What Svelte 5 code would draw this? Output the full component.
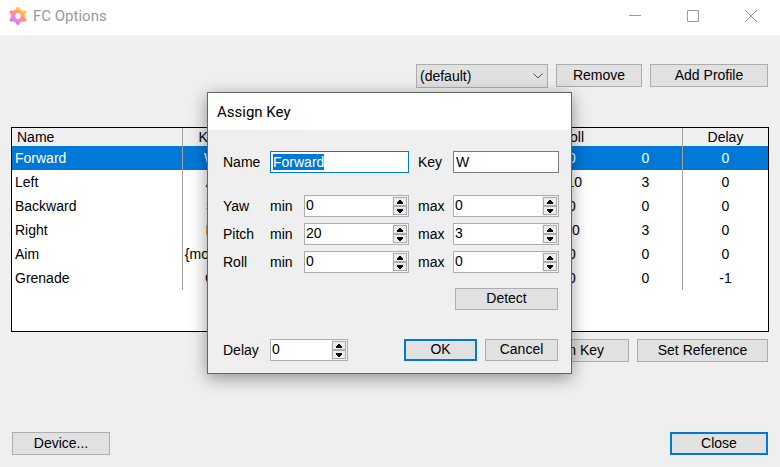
<script>
  import { onMount } from 'svelte';

  const profiles = ['(default)'];
  const rows = [
    { name: 'Forward', key: 'W', axes: [0, 0, 20, 3, 0, 0], delay: 0 },
    { name: 'Left', key: 'A', axes: [0, 0, 0, 0, -10, 3], delay: 0 },
    { name: 'Backward', key: 'S', axes: [0, 0, -10, 3, 0, 0], delay: 0 },
    { name: 'Right', key: 'D', axes: [0, 0, 0, 0, 10, 3], delay: 0 },
    { name: 'Aim', key: '{mouse}', axes: [0, 0, 0, 0, 0, 0], delay: 0 },
    { name: 'Grenade', key: 'G', axes: [0, 0, 0, 0, 0, 0], delay: -1 }
  ];

  let selected = $state(0);
  let profile = $state('(default)');
  let name = $state('Forward');
  let key = $state('W');
  let delay = $state(0);
  let axes = $state([
    { label: 'Yaw', min: 0, max: 0 },
    { label: 'Pitch', min: 20, max: 3 },
    { label: 'Roll', min: 0, max: 0 }
  ]);
  let nameInput;

  onMount(() => {
    nameInput.focus();
    nameInput.select();
  });
</script>

{#snippet spinner(id, label, value, set)}
  <div class="spin">
    <input {id} type="number" aria-label={label} {value} oninput={(e) => set(+e.currentTarget.value)} />
    <div class="steps">
      <button type="button" tabindex="-1" aria-label="Increase {label}" onclick={() => set(value + 1)}>
        <svg width="8" height="4" viewBox="0 0 8 4"><path d="M3 0h2v1h1v1h1v2H1V2h1V1h1z" /></svg>
      </button>
      <button type="button" tabindex="-1" aria-label="Decrease {label}" onclick={() => set(value - 1)}>
        <svg width="8" height="4" viewBox="0 0 8 4"><path d="M1 0h6v2H6v1H5v1H3V3H2V2H1z" /></svg>
      </button>
    </div>
  </div>
{/snippet}

<div class="window">
  <header class="titlebar">
    <svg class="logo" width="18" height="20" viewBox="0 0 18 20">
      <defs>
        <linearGradient id="gear" gradientUnits="userSpaceOnUse" x1="4" y1="17" x2="14" y2="3">
          <stop offset="0" stop-color="#b886ff" />
          <stop offset="0.3" stop-color="#ff80d5" />
          <stop offset="0.55" stop-color="#ff9080" />
          <stop offset="1" stop-color="#ffd445" />
        </linearGradient>
      </defs>
      <g fill="none" stroke="url(#gear)" stroke-linecap="round">
        <circle cx="9" cy="10" r="5" stroke-width="4" />
        <path
          stroke-width="4"
          d="M9 5L9.010 3M13.300 7.500L15.500 6.300M13.300 12.500L15.500 13.700M9 15L9.010 17M4.700 12.500L2.500 13.700M4.700 7.500L2.500 6.300"
        />
      </g>
    </svg>
    <h1>FC Options</h1>
    <div class="controls">
      <button type="button" aria-label="Minimize">
        <svg width="12" height="12" viewBox="0 0 12 12"><path d="M0 5.500h12" /></svg>
      </button>
      <button type="button" aria-label="Maximize">
        <svg width="12" height="12" viewBox="0 0 12 12"><path d="M.5.5h11v11H.5z" /></svg>
      </button>
      <button type="button" aria-label="Close window">
        <svg width="12" height="12" viewBox="0 0 12 12"><path d="M0 0l12 12M12 0L0 12" /></svg>
      </button>
    </div>
  </header>

  <main>
    <div class="toolbar">
      <div class="combo">
        <select aria-label="Profile" bind:value={profile}>
          {#each profiles as p}<option>{p}</option>{/each}
        </select>
        <svg width="10" height="6" viewBox="0 0 10 6"><path d="M.5.5L5 5 9.500.5" /></svg>
      </div>
      <button type="button" class="btn remove">Remove</button>
      <button type="button" class="btn add">Add Profile</button>
    </div>

    <div class="list">
      <table>
        <colgroup>
          <col class="c-name" /><col class="c-key" />
          <col /><col /><col /><col /><col /><col />
          <col class="c-delay" />
        </colgroup>
        <thead>
          <tr>
            <th class="first line">Name</th>
            <th class="line">Key</th>
            <th>Yaw</th><th class="line"></th>
            <th>Pitch</th><th class="line"></th>
            <th>Roll</th><th class="line"></th>
            <th>Delay</th>
          </tr>
        </thead>
        <tbody>
          {#each rows as row, i}
            <tr class:selected={i === selected} onclick={() => (selected = i)}>
              <td class="first line">{row.name}</td>
              <td class="line">{row.key}</td>
              {#each row.axes as value, a}
                <td class:line={a % 2 === 1}>{value}</td>
              {/each}
              <td>{row.delay}</td>
            </tr>
          {/each}
        </tbody>
      </table>
    </div>

    <div class="actions">
      <button type="button" class="btn assign">Assign Key</button>
      <button type="button" class="btn reference">Set Reference</button>
    </div>

    <footer>
      <button type="button" class="btn wide">Device...</button>
      <button type="button" class="btn wide primary">Close</button>
    </footer>
  </main>

  <form class="dialog" role="dialog" aria-labelledby="dialog-title" onsubmit={(e) => e.preventDefault()}>
    <h2 id="dialog-title">Assign Key</h2>
    <div class="content">
      <div class="fields">
        <label for="name">Name</label>
        <input id="name" class="text name" bind:this={nameInput} bind:value={name} />
        <label class="second" for="key">Key</label>
        <input id="key" class="text" bind:value={key} />
      </div>

      <div class="fields axes">
        {#each axes as axis}
          <span>{axis.label}</span>
          <label for="{axis.label}-min">min</label>
          {@render spinner(`${axis.label}-min`, `${axis.label} min`, axis.min, (v) => (axis.min = v))}
          <label class="second" for="{axis.label}-max">max</label>
          {@render spinner(`${axis.label}-max`, `${axis.label} max`, axis.max, (v) => (axis.max = v))}
        {/each}
      </div>

      <div class="detect">
        <button type="button" class="btn">Detect</button>
      </div>

      <div class="bottom">
        <label for="delay">Delay</label>
        <div class="delay">
          {@render spinner('delay', 'Delay', delay, (v) => (delay = v))}
        </div>
        <div class="confirm">
          <button type="submit" class="btn primary">OK</button>
          <button type="button" class="btn">Cancel</button>
        </div>
      </div>
    </div>
  </form>
</div>

<style>
  .window {
    position: relative;
    display: flex;
    flex-direction: column;
    min-height: 100vh;
    background: #efefef;
    color: #000;
    font: 14px/16px 'Liberation Sans', Arial, sans-serif;
    box-sizing: border-box;
  }
  .window :global(*) {
    box-sizing: border-box;
  }
  button,
  input,
  select {
    font: inherit;
    color: inherit;
    margin: 0;
  }
  svg {
    display: block;
  }
  h1,
  h2 {
    margin: 0;
    font: 15px/20px Roboto, 'Segoe UI', sans-serif;
  }

  .titlebar {
    display: flex;
    align-items: center;
    height: 35px;
    padding: 0 0 3px 9px;
    background: #fff;
  }
  h1 {
    margin-left: 6px;
    color: #999;
  }
  .controls {
    display: flex;
    margin-left: auto;
  }
  .controls button {
    display: grid;
    place-items: center;
    width: 58px;
    height: 32px;
    padding: 0;
    border: 0;
    background: none;
  }
  .controls path {
    fill: none;
    stroke: #999;
  }

  main {
    flex: 1;
    display: flex;
    flex-direction: column;
    padding: 29px 12px 12px;
  }
  .btn {
    height: 23px;
    padding: 0 0 2px;
    border: 1px solid #adadad;
    background: #e1e1e1;
    line-height: 18px;
    white-space: nowrap;
  }
  .primary {
    border: 2px solid #0078d7;
    line-height: 16px;
  }
  .toolbar {
    display: flex;
    justify-content: flex-end;
    gap: 8px;
  }
  .combo {
    display: grid;
    align-items: center;
    width: 132px;
  }
  .combo > * {
    grid-area: 1 / 1;
  }
  .combo select {
    appearance: none;
    width: 100%;
    height: 24px;
    padding: 0 3px;
    border: 1px solid #adadad;
    border-radius: 0;
    background: #e1e1e1;
  }
  .combo svg {
    justify-self: end;
    margin-right: 5px;
    pointer-events: none;
  }
  .combo path {
    fill: none;
    stroke: #555;
  }
  .remove {
    width: 86px;
  }
  .add {
    width: 118px;
  }

  .list {
    height: 205px;
    margin: 39px -1px 7px;
    border: 1px solid #000;
    background: #fff;
  }
  table {
    width: 100%;
    table-layout: fixed;
    border-collapse: separate;
    border-spacing: 0;
  }
  .c-name {
    width: 171px;
  }
  .c-key {
    width: 56px;
  }
  .c-delay {
    width: 85px;
  }
  th,
  td {
    padding: 0;
    text-align: center;
    font-weight: normal;
    white-space: nowrap;
  }
  th {
    height: 18px;
    background: #efefef;
  }
  td {
    height: 24px;
  }
  .line {
    border-right: 1px solid #a0a0a0;
  }
  .first {
    padding-left: 3px;
    text-align: left;
  }
  th.first {
    padding-left: 5px;
  }
  .selected {
    background: #0078d7;
    color: #fff;
  }

  .actions {
    display: flex;
    justify-content: flex-end;
    gap: 8px;
  }
  .assign {
    width: 120px;
  }
  .reference {
    width: 131px;
  }
  footer {
    display: flex;
    justify-content: space-between;
    margin-top: auto;
  }
  .wide {
    width: 98px;
  }

  .dialog {
    position: absolute;
    inset: 0 1px 1px 0;
    width: 365px;
    height: fit-content;
    margin: auto;
    border: 1px solid #666;
    background: #efefef;
    box-shadow: 0 4px 16px rgba(0, 0, 0, 0.4);
  }
  h2 {
    height: 37px;
    padding: 9px;
    background: #fff;
  }
  .content {
    padding: 21px 12px 12px 15px;
  }
  .fields {
    display: grid;
    grid-template-columns: 47px 34px minmax(0, 1fr) 44px 106px;
    row-gap: 6px;
    align-items: center;
  }
  .second {
    padding-left: 9px;
  }
  .text {
    width: 100%;
    height: 22px;
    padding: 0 2px;
    border: 1px solid #7a7a7a;
    border-radius: 0;
    background: #fff;
    outline: none;
  }
  .text:focus {
    border-color: #0078d7;
  }
  .text::selection {
    background: #0078d7;
    color: #fff;
  }
  .name {
    grid-column: span 2;
  }
  .axes {
    margin-top: 22px;
  }
  .spin {
    display: flex;
    min-width: 0;
    height: 22px;
    border: 1px solid #abadb3;
    background: #fff;
  }
  .spin input {
    flex: 1;
    width: 100%;
    min-width: 0;
    padding: 0 1px 2px;
    border: 0;
    background: none;
    outline: none;
    appearance: textfield;
  }
  .spin input::-webkit-inner-spin-button {
    appearance: none;
    margin: 0;
  }
  .steps {
    display: grid;
    flex: none;
    grid-template-rows: 1fr 1fr;
    width: 16px;
    padding: 1px;
    background: #f0f0f0;
  }
  .steps button {
    display: grid;
    place-items: center;
    padding: 0;
    border: 1px solid #acacac;
    background: #ececec;
  }
  .detect {
    display: flex;
    justify-content: flex-end;
    margin: 15px 1px 29px 0;
  }
  .content .btn {
    height: 22px;
  }
  .detect .btn {
    width: 103px;
  }
  .bottom {
    display: grid;
    grid-template-columns: 47px 78px 1fr;
    align-items: center;
  }
  .confirm {
    display: flex;
    justify-content: flex-end;
    gap: 8px;
    padding-right: 1px;
  }
  .confirm .btn {
    width: 73px;
  }
</style>
